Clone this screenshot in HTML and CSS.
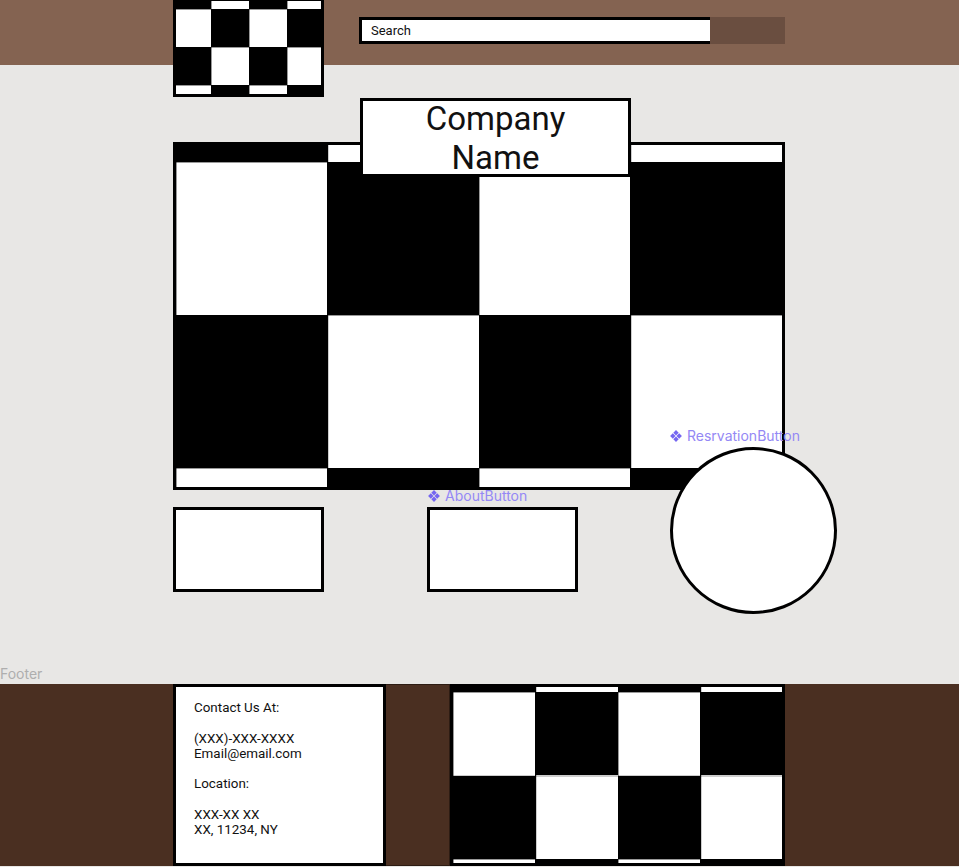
FILE: index.html
```html
<!DOCTYPE html>
<html lang="en">
<head>
    <meta charset="UTF-8">
    <meta name="viewport" content="width=device-width, initial-scale=1.0">
    <title>Company Name</title>
    <link rel="stylesheet" href="styles.css">
</head>
<body>
    <header class="topbar">
        <div class="wrap topbar-inner">
            <div class="logo"></div>
            <div class="search">
                <div class="search-field">Search</div>
            </div>
        </div>
    </header>

    <main class="content">
        <div class="wrap stage">
            <div class="company">Company<br>Name</div>
            <div class="hero"></div>

            <div class="actions">
                <div class="btn"></div>
                <div class="btn btn-about">
                    <span class="tag tag-about">
                        <svg class="tag-icon" viewBox="0 0 12 12"><path d="M6 .1 8.7 2.8 6 5.5 3.3 2.8Z M2.8 3.3 5.5 6 2.8 8.7 .1 6Z M9.2 3.3 11.9 6 9.2 8.7 6.5 6Z M6 6.5 8.7 9.2 6 11.9 3.3 9.2Z"/></svg>
                        AboutButton
                    </span>
                </div>
            </div>

            <span class="tag tag-reserve">
                <svg class="tag-icon" viewBox="0 0 12 12"><path d="M6 .1 8.7 2.8 6 5.5 3.3 2.8Z M2.8 3.3 5.5 6 2.8 8.7 .1 6Z M9.2 3.3 11.9 6 9.2 8.7 6.5 6Z M6 6.5 8.7 9.2 6 11.9 3.3 9.2Z"/></svg>
                ResrvationButton
            </span>
            <div class="btn-round"></div>
        </div>
        <span class="frame-label">Footer</span>
    </main>

    <footer class="bottombar">
        <div class="wrap bottombar-inner">
            <div class="contact">
                <p>Contact Us At:</p>
                <p>(XXX)-XXX-XXXX<br>Email@email.com</p>
                <p>Location:</p>
                <p>XXX-XX XX<br>XX, 11234, NY</p>
            </div>
            <div class="divider"></div>
            <div class="footer-board"></div>
        </div>
    </footer>
</body>
</html>
```

FILE: styles.css
```css
* {
    box-sizing: border-box;
}
body {
    margin: 0;
    background-color: #e8e7e5;
    font-family: Roboto, "Liberation Sans", sans-serif;
    color: #111;
}
.wrap {
    width: 612px;
    margin-left: calc(50% - 306.5px);
}

/* header */
.topbar {
    height: 65px;
    background-color: #846351;
}
.topbar-inner {
    display: flex;
    align-items: flex-start;
}
.logo {
    width: 151px;
    height: 99px;
    margin-top: -2px;
    border: 3px solid #000;
    position: relative;
    z-index: 1;
    background:
        linear-gradient(90deg, rgba(0,0,0,.4) 1px, transparent 1px) -3px 8px / 38px 38px,
        linear-gradient(rgba(0,0,0,.4) 1px, transparent 1px) -3px 8px / 38px 38px,
        repeating-conic-gradient(#000 0 25%, #fff 0 50%) -3px 8px / 76px 76px;
}
.search {
    width: 426px;
    height: 27px;
    margin: 17px 0 0 35px;
    background-color: #6a4e40;
}
.search-field {
    width: 351px;
    height: 27px;
    border: 3px solid #000;
    border-right: none;
    background-color: #fff;
    padding-left: 9px;
    font-size: 13px;
    line-height: 21px;
}

/* main area */
.content {
    position: relative;
    height: 619px;
}
.stage {
    position: relative;
    padding-top: 33px;
}
.company {
    position: relative;
    z-index: 1;
    width: 271px;
    height: 79px;
    margin-left: 187px;
    border: 3px solid #000;
    background-color: #fff;
    display: flex;
    align-items: center;
    justify-content: center;
    text-align: center;
    font-size: 33px;
    line-height: 39px;
}
.hero {
    height: 348px;
    margin-top: -35px;
    border: 3px solid #000;
    background:
        linear-gradient(90deg, rgba(0,0,0,.4) 1px, transparent 1px) 0 17px / 151.5px 153px,
        linear-gradient(rgba(0,0,0,.4) 1px, transparent 1px) 0 17px / 151.5px 153px,
        repeating-conic-gradient(#000 0 25%, #fff 0 50%) 0 17px / 303px 306px;
}
.actions {
    display: flex;
    gap: 103px;
    margin-top: 17px;
}
.btn {
    width: 151px;
    height: 85px;
    border: 3px solid #000;
    background-color: #fff;
}
.btn-about {
    position: relative;
}
.btn-round {
    position: absolute;
    left: 497px;
    top: 382px;
    width: 167px;
    height: 167px;
    border: 3px solid #000;
    border-radius: 50%;
    background-color: #fff;
}

/* figma-style annotations */
.tag {
    position: absolute;
    display: inline-flex;
    align-items: center;
    gap: 5px;
    font-family: Inter, "Liberation Sans", sans-serif;
    font-size: 14px;
    line-height: 16px;
    color: #9488f5;
    white-space: nowrap;
}
.tag-icon {
    width: 12px;
    height: 12px;
    fill: #7566f0;
}
.tag-about {
    left: -2px;
    top: -22px;
}
.tag-reserve {
    left: 497px;
    top: 363px;
}
.frame-label {
    position: absolute;
    left: 0;
    bottom: 2px;
    font-family: Inter, "Liberation Sans", sans-serif;
    font-size: 14px;
    line-height: 17px;
    color: #aeaeae;
}

/* footer */
.bottombar {
    height: 182px;
    background-color: #4a2f21;
}
.bottombar-inner {
    display: flex;
    height: 182px;
}
.contact {
    width: 213px;
    border: 3px solid #000;
    background-color: #fff;
    padding: 13px 18px;
    font-size: 13.4px;
    line-height: 15.3px;
}
.contact p {
    margin: 0 0 15.3px;
}
.divider {
    width: 64px;
    border: 1px solid #2d1c13;
    border-left: none;
}
.footer-board {
    flex: 1;
    border: 3px solid #000;
    background:
        linear-gradient(90deg, rgba(0,0,0,.4) 1px, transparent 1px) 0 5px / 82.5px 83.5px,
        linear-gradient(rgba(0,0,0,.4) 1px, transparent 1px) 0 5px / 82.5px 83.5px,
        repeating-conic-gradient(#000 0 25%, #fff 0 50%) 0 5px / 165px 167px;
}
```
